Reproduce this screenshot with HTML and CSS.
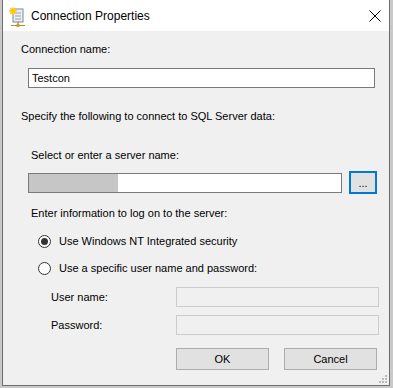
FILE: index.html
```html
<!DOCTYPE html>
<html lang="en">
<head>
  <meta charset="UTF-8" />
  <title>Connection Properties</title>
  <link rel="stylesheet" href="styles.css">
</head>
<body>
  <div class="window">
    <div class="titlebar">
      <svg class="app-icon" width="16" height="20" viewBox="0 0 16 20">
        <rect x="4" y="2" width="10" height="13" fill="#e8eef4" stroke="#7d8a99" stroke-width="1"/>
        <line x1="6" y1="6" x2="12" y2="6" stroke="#9aa7b5"/>
        <line x1="6" y1="9" x2="12" y2="9" stroke="#9aa7b5"/>
        <line x1="6" y1="12" x2="12" y2="12" stroke="#9aa7b5"/>
        <circle cx="4" cy="4" r="3" fill="#ffd21f"/>
        <path d="M4 0 V8 M0 4 H8 M1.2 1.2 L6.8 6.8 M6.8 1.2 L1.2 6.8" stroke="#ffc400" stroke-width="1"/>
        <line x1="9" y1="15" x2="9" y2="18" stroke="#8a6a20"/>
        <line x1="2" y1="18.5" x2="16" y2="18.5" stroke="#c08a1a"/>
        <rect x="7.5" y="17" width="3" height="3" fill="#d89c1c"/>
      </svg>
      <span class="title">Connection Properties</span>
      <svg class="close" width="12" height="12" viewBox="0 0 12 12">
        <path d="M0.5 0.5 L11.5 11.5 M11.5 0.5 L0.5 11.5" stroke="#000" stroke-width="1"/>
      </svg>
    </div>

    <div class="content">
      <div class="label l-name">Connection name:</div>
      <div class="textbox tb-name">Testcon</div>

      <div class="label l-specify">Specify the following to connect to SQL Server data:</div>

      <div class="label l-server indent">Select or enter a server name:</div>
      <div class="server-row">
        <div class="textbox tb-server"><span class="blur"></span></div>
        <div class="browse">...</div>
      </div>

      <div class="label l-logon indent">Enter information to log on to the server:</div>

      <div class="radio-row r-first">
        <span class="radio checked"></span>
        <span class="label">Use Windows NT Integrated security</span>
      </div>
      <div class="radio-row r-second">
        <span class="radio"></span>
        <span class="label">Use a specific user name and password:</span>
      </div>

      <div class="field-row f-user">
        <span class="label">User name:</span>
        <div class="textbox disabled"></div>
      </div>
      <div class="field-row f-pass">
        <span class="label">Password:</span>
        <div class="textbox disabled"></div>
      </div>

      <div class="buttons">
        <div class="btn">OK</div>
        <div class="btn">Cancel</div>
      </div>
    </div>

    <svg class="grip" width="10" height="10" viewBox="0 0 10 10">
      <rect x="7" y="1" width="2" height="2" fill="#bcbcbc"/>
      <rect x="4" y="4" width="2" height="2" fill="#bcbcbc"/>
      <rect x="7" y="4" width="2" height="2" fill="#bcbcbc"/>
      <rect x="1" y="7" width="2" height="2" fill="#bcbcbc"/>
      <rect x="4" y="7" width="2" height="2" fill="#bcbcbc"/>
      <rect x="7" y="7" width="2" height="2" fill="#bcbcbc"/>
    </svg>
  </div>
</body>
</html>
```

FILE: styles.css
```css
* { margin: 0; padding: 0; box-sizing: border-box; }
body {
  background: #c9c9c9;
  font-family: 'Liberation Sans', Arial, sans-serif;
  font-size: 11px;
  color: #000;
  width: 393px;
  height: 388px;
  overflow: hidden;
}

.window {
  position: relative;
  margin-left: 2px;
  width: 388px;
  height: 386px;
  background: #f0f0f0;
  border-left: 1px solid #6e6e6e;
  border-right: 1px solid #6e6e6e;
  border-bottom: 1px solid #6e6e6e;
}

.titlebar {
  height: 31px;
  background: #fff;
  display: flex;
  align-items: center;
}
.app-icon { margin-left: 6px; margin-top: 2px; }
.title {
  margin-left: 6px;
  font-size: 12px;
  line-height: 16px;
}
.close { margin-left: auto; margin-right: 8px; }

.content { padding-left: 18px; }

.label { line-height: 13px; white-space: nowrap; }
.indent { margin-left: 10px; }

.l-name { margin-top: 12px; }
.l-specify { margin-top: 22px; }
.l-server { margin-top: 26px; }
.l-logon { margin-top: 13px; }

.textbox {
  height: 20px;
  background: #fff;
  border: 1px solid #7a7a7a;
  line-height: 18px;
  padding-left: 3px;
}
.tb-name { margin-top: 12px; margin-left: 7px; width: 347px; }

.server-row {
  margin-top: 9px;
  margin-left: 7px;
  display: flex;
  align-items: center;
  gap: 7px;
}
.tb-server { width: 314px; padding-left: 0; }
.blur {
  display: block;
  width: 89px;
  height: 18px;
  background: #c6c6c6;
}
.browse {
  width: 28px;
  height: 23px;
  border: 2px solid #0078d7;
  background: #e1e1e1;
  text-align: center;
  line-height: 21px;
  font-size: 11px;
}

.radio-row {
  display: flex;
  align-items: center;
  height: 14px;
  margin-left: 17px;
  gap: 8px;
}
.r-first { margin-top: 14px; }
.r-second { margin-top: 13px; }
.radio {
  width: 13px;
  height: 13px;
  border: 1px solid #333;
  border-radius: 50%;
  background: #fff;
  display: flex;
  align-items: center;
  justify-content: center;
}
.radio.checked::after {
  content: '';
  width: 7px;
  height: 7px;
  border-radius: 50%;
  background: #333;
}

.field-row {
  display: flex;
  align-items: center;
  margin-left: 30px;
}
.field-row .label { width: 125px; }
.f-user { margin-top: 12px; }
.f-pass { margin-top: 8px; }
.textbox.disabled {
  width: 203px;
  background: #f0f0f0;
  border-color: #cccccc;
}

.buttons {
  display: flex;
  gap: 15px;
  margin-top: 13px;
  margin-left: 155px;
}
.btn {
  width: 93px;
  height: 22px;
  background: #e1e1e1;
  border: 1px solid #adadad;
  text-align: center;
  line-height: 20px;
  font-size: 11px;
}

.grip {
  position: absolute;
  right: 1px;
  bottom: 1px;
}
```
